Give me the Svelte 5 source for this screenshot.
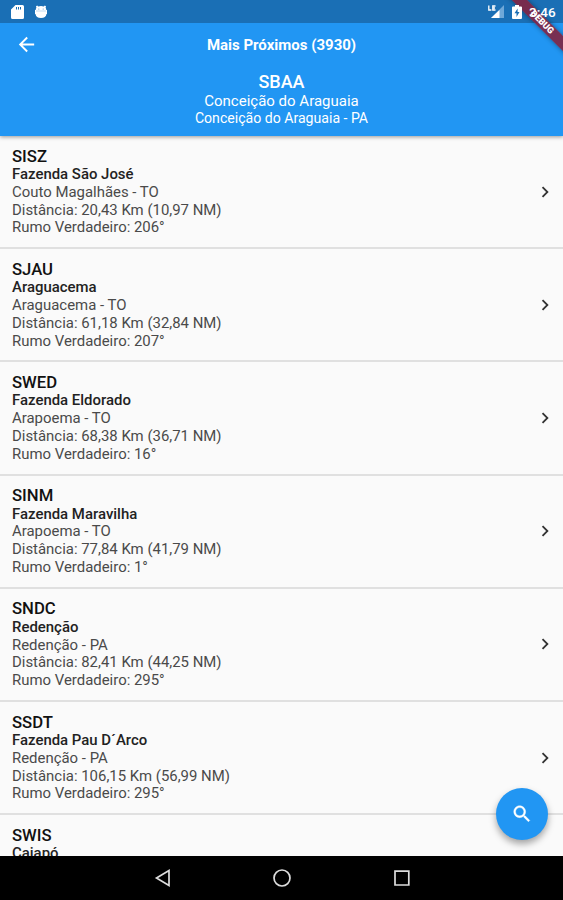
<script lang="ts">
  const current = {
    code: "SBAA",
    name: "Conceição do Araguaia",
    city: "Conceição do Araguaia - PA",
  };

  const airfields = [
    { code: "SISZ", name: "Fazenda São José", city: "Couto Magalhães - TO", km: "20,43", nm: "10,97", heading: 206 },
    { code: "SJAU", name: "Araguacema", city: "Araguacema - TO", km: "61,18", nm: "32,84", heading: 207 },
    { code: "SWED", name: "Fazenda Eldorado", city: "Arapoema - TO", km: "68,38", nm: "36,71", heading: 16 },
    { code: "SINM", name: "Fazenda Maravilha", city: "Arapoema - TO", km: "77,84", nm: "41,79", heading: 1 },
    { code: "SNDC", name: "Redenção", city: "Redenção - PA", km: "82,41", nm: "44,25", heading: 295 },
    { code: "SSDT", name: "Fazenda Pau D´Arco", city: "Redenção - PA", km: "106,15", nm: "56,99", heading: 295 },
    { code: "SWIS", name: "Caiapó", city: "", km: "", nm: "", heading: null },
  ];
</script>

<div class="screen">
  <header>
    <div class="status">
      <div class="status__group">
        <svg width="13" height="14" viewBox="0 0 13 14">
          <path fill="#fff" fill-rule="evenodd" d="M4.5 0H11.5Q13 0 13 1.5V12.5Q13 14 11.5 14H1.5Q0 14 0 12.5V4.5ZM5 2V4.5H6V2ZM7 2V4.5H8V2ZM9 2V4.5H10V2Z" />
        </svg>
        <svg width="12" height="14" viewBox="0 0 12 14">
          <path fill="#fff" d="M1 1.200L2.200 .6 3.200 1.500Q6 .4 8.800 1.500L9.800 .6 11 1.200 10.600 2.800Q11.300 3.700 11.300 5H12V9H11.500Q11 13 6 13T.5 9H0V5H.7Q.7 3.700 1.400 2.800Z" />
          <path stroke="#b4d2ec" stroke-width=".8" d="M1 6H11" />
          <circle cx="3.800" cy="4" r=".6" fill="#5a9bd0" />
          <circle cx="8.200" cy="4" r=".6" fill="#5a9bd0" />
        </svg>
      </div>
      <div class="status__group status__group--right">
        <svg width="17" height="14" viewBox="0 0 17 14">
          <path fill="#6fa8d8" d="M16 0V13H3Z" />
          <path fill="#fff" d="M11.500 5V13H3Z" />
          <path fill="none" stroke="#fff" stroke-width="1.300" d="M.8 .5V5H3.400M7.500 1H4.800V5H7.500M4.800 3H7" />
        </svg>
        <svg class="battery" width="10" height="14" viewBox="0 0 10 14">
          <path fill="#fff" fill-rule="evenodd" d="M3 0H7V1.500H9Q10 1.500 10 2.500V13Q10 14 9 14H1Q0 14 0 13V2.500Q0 1.500 1 1.500H3ZM5.600 3.500L2.500 8.300H4.500V12L7.500 7H5.600Z" />
        </svg>
        <span class="clock">3:46</span>
      </div>
    </div>
    <div class="toolbar">
      <svg width="23" height="23" viewBox="0 0 24 24">
        <path fill="#fff" d="M20 11H7.830l5.590-5.590L12 4l-8 8 8 8 1.410-1.410L7.830 13H20v-2z" />
      </svg>
      <h1>Mais Próximos (3930)</h1>
    </div>
    <div class="current">
      <strong>{current.code}</strong>
      <span>{current.name}</span>
      <span class="current__city">{current.city}</span>
    </div>
    <!-- Debug ribbon over the top right corner, the clock stays above it -->
    <div class="ribbon"><span>DEBUG</span></div>
  </header>

  <main>
    {#each airfields as field}
      <div class="row">
        <div class="row__text">
          <strong>{field.code}</strong>
          <b>{field.name}</b>
          {#if field.city}
            <span>{field.city}</span>
            <span>Distância: {field.km} Km ({field.nm} NM)</span>
            <span>Rumo Verdadeiro: {field.heading}°</span>
          {/if}
        </div>
        <svg width="22" height="22" viewBox="0 0 24 24">
          <path fill="#333" d="M10 6L8.590 7.410 13.170 12l-4.580 4.590L10 18l6-6z" />
        </svg>
      </div>
    {/each}
  </main>

  <button class="search" aria-label="Pesquisar">
    <svg width="22" height="22" viewBox="0 0 24 24">
      <path fill="#fff" stroke="#fff" stroke-width=".4" d="M15.500 14h-.79l-.28-.27C15.410 12.590 16 11.110 16 9.500 16 5.910 13.090 3 9.500 3S3 5.910 3 9.500 5.910 16 9.500 16c1.610 0 3.090-.59 4.230-1.570l.27.28v.79l5 4.990L20.490 19l-4.990-5zm-6 0C7.010 14 5 11.990 5 9.500S7.010 5 9.500 5 14 7.010 14 9.500 11.990 14 9.500 14z" />
    </svg>
  </button>

  <nav>
    <svg width="20" height="20" viewBox="0 0 20 20"><path d="M17 2.500V17.500L4.500 10Z" /></svg>
    <svg width="20" height="20" viewBox="0 0 20 20"><circle cx="10" cy="10" r="8" /></svg>
    <svg width="20" height="20" viewBox="0 0 20 20"><path d="M3 3.200H16.800V17H3Z" /></svg>
  </nav>
</div>

<style>
  :global(body) {
    overflow: hidden;
  }

  .screen {
    position: relative;
    display: flex;
    flex-direction: column;
    width: 563px;
    height: 900px;
    overflow: hidden;
    background: #fafafa;
    font-family: Roboto, "Liberation Sans", sans-serif;
    color: #4a4a4a;
  }

  header {
    position: relative;
    z-index: 1;
    flex: none;
    height: 136px;
    background: #2196f3;
    color: #fff;
    box-shadow: 0 1px 4px rgba(0, 0, 0, 0.4);
  }

  .status {
    display: flex;
    justify-content: space-between;
    height: 23px;
    padding: 0 8px 0 11px;
    background: #1a6fb5;
  }

  .status__group {
    display: flex;
    align-items: center;
    gap: 11px;
  }

  .status__group--right {
    position: relative;
    z-index: 1;
    gap: 7px;
  }

  .clock {
    width: 26px;
    font-size: 13.500px;
    font-weight: 500;
    white-space: nowrap;
  }

  .toolbar {
    display: grid;
    grid-template-columns: 23px 1fr 23px;
    align-items: center;
    height: 43px;
    padding: 0 15px;
  }

  h1 {
    margin: 0;
    font-size: 15px;
    font-weight: 700;
    text-align: center;
  }

  .current {
    display: flex;
    flex-direction: column;
    align-items: center;
    padding-top: 6px;
    font-size: 15px;
    line-height: 18px;
  }

  .current strong {
    font-size: 18px;
    line-height: 20px;
    font-weight: 500;
  }

  .current__city {
    font-size: 14.100px;
    line-height: 17px;
  }

  .ribbon {
    position: absolute;
    top: 0;
    right: 0;
    width: 60px;
    height: 60px;
    overflow: hidden;
  }

  .ribbon span {
    position: absolute;
    top: 17px;
    left: -16px;
    width: 110px;
    height: 11px;
    transform: rotate(45deg);
    background: rgba(130, 35, 65, 0.9);
    box-shadow: 0 0 5px rgba(0, 0, 0, 0.4);
    font-size: 9px;
    font-weight: 900;
    line-height: 11px;
    text-align: center;
  }

  main {
    flex: 1;
    min-height: 0;
    overflow: hidden;
  }

  .row {
    display: flex;
    justify-content: space-between;
    align-items: center;
    box-sizing: border-box;
    height: 113.200px;
    padding: 0 7px 0 12px;
    border-bottom: 2px solid #e0e0e0;
  }

  .row__text {
    display: flex;
    flex-direction: column;
    align-self: flex-start;
    padding-top: 11.600px;
    font-size: 14.930px;
    line-height: 17.800px;
    white-space: nowrap;
  }

  .row__text strong {
    font-size: 16.700px;
    line-height: 18.400px;
    font-weight: 500;
    color: #111;
  }

  .row__text b {
    font-weight: 500;
    color: #222;
  }

  .search {
    position: absolute;
    right: 15px;
    bottom: 60px;
    display: grid;
    place-items: center;
    width: 52px;
    height: 52px;
    padding: 0;
    border: 0;
    border-radius: 50%;
    background: #2196f3;
    box-shadow: 0 4px 7px rgba(0, 0, 0, 0.35);
  }

  nav {
    z-index: 1;
    display: flex;
    flex: none;
    justify-content: center;
    align-items: center;
    gap: 100px;
    height: 44px;
    background: #000;
  }

  nav svg {
    fill: none;
    stroke: #ddd;
    stroke-width: 1.700;
  }
</style>
